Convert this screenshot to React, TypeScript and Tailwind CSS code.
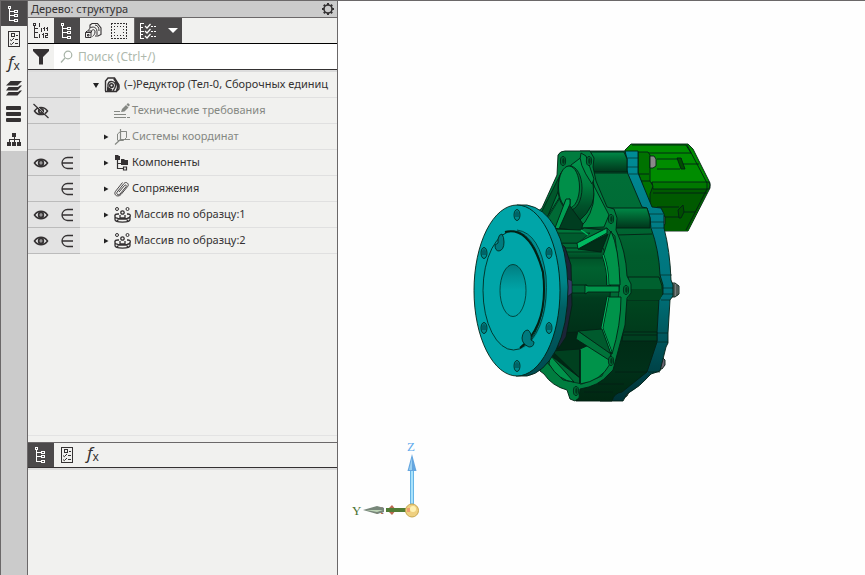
import React from "react";

type IconProps = { className?: string };

const stroke = { fill: "none", stroke: "currentColor" } as const;

function TreeIcon({ className = "" }: IconProps) {
  return (
    <svg className={className} width="16" height="18" viewBox="0 0 16 18" {...stroke} shapeRendering="crispEdges">
      <path d="M3.500 3v12.500H8M3.500 6.500H8M3.500 10.500H8" />
      <path d="M2.500 1.500h2v2h-2zM8.500 5.500h3v2h-3zM8.500 9.500h3v2h-3zM8.500 14.500h3v2h-3z" />
    </svg>
  );
}

function ChecklistIcon() {
  return (
    <svg width="16" height="18" viewBox="0 0 16 18" {...stroke}>
      <path d="M2.500 1.500h11v15h-11z" shapeRendering="crispEdges" />
      <path d="M5.500 3.500h3v3h-3zM10 5.500h2M9 9.500h3M9 13.500h3" shapeRendering="crispEdges" />
      <path d="m4 9.500 1.300 1.200L8 8M4 13.500l1.300 1.200L8 12" />
    </svg>
  );
}

function FxIcon() {
  return (
    <span className="flex items-end pb-1 leading-none">
      <i className="text-[17px] leading-4">f</i>
      <span className="text-[12px] leading-[8px]">x</span>
    </span>
  );
}

function LayersIcon() {
  return (
    <svg width="18" height="16" viewBox="0 0 18 16" fill="currentColor">
      <path d="M5.500 0H17l-4.500 4.500H1zM3.500 6H13l2-1.500h2L12.500 9.500H1zM3.500 11H13l2-1.500h2L12.500 14.500H1z" />
    </svg>
  );
}

function BarsIcon() {
  return (
    <svg width="18" height="18" viewBox="0 0 18 18" fill="currentColor">
      <rect x="1" y="1" width="15" height="4" rx="1" />
      <rect x="1" y="7" width="15" height="4" rx="1" />
      <rect x="1" y="13" width="15" height="4" rx="1" />
    </svg>
  );
}

function OrgIcon() {
  return (
    <svg width="16" height="16" viewBox="0 0 16 16" shapeRendering="crispEdges">
      <path d="M6 2h4v4H6zM1 11h4v4H1zM6 11h4v4H6zM11 11h4v4h-4z" fill="currentColor" />
      <path d="M8 6v5M3 11V8.500h10V11" {...stroke} />
    </svg>
  );
}

function NumberedTreeIcon() {
  return (
    <svg width="18" height="18" viewBox="0 0 18 18" shapeRendering="crispEdges">
      <path d="M2.500 3v12.500H6M2.500 6.500H6M2.500 10.500H6" {...stroke} />
      <path d="M1.500 1.500h2v2h-2z" {...stroke} />
      <path d="M7 1h1v4H7zM9 6h1v4H9zM12 5h1v4h-1zM11 6h1v1h-1zM15 5h1v4h-1zM14 6h1v1h-1zM11 11h1v5h-1zM10 12h1v1h-1zM13 11h3v3h-2v1h2v1h-3v-3h2v-1h-2zM7 12h1v4H7z" fill="currentColor" />
    </svg>
  );
}

function PartsIcon() {
  return (
    <svg width="18" height="18" viewBox="0 0 18 18" {...stroke}>
      <path d="M6 6V3l2-1.500h5.500L17 6v6.500L14 14h-3" strokeWidth="1.100" />
      <path d="M4.500 8.500C6 3.500 13 4 13 9.500v3.500M7.500 9.500c.5-3 4-2 3.500.5 0 2-1 3-2.500 4.500M11 3c3 .5 4 2.500 4 6" />
      <path d="M1.500 10.500H7v5H1.500zM3.500 12.500h1.500v1.500H3.500zM1.500 10.500 3 9h4.500v1.500" />
    </svg>
  );
}

function MarqueeIcon() {
  return (
    <svg width="18" height="18" viewBox="0 0 18 18" {...stroke} shapeRendering="crispEdges">
      <path d="M1.500 1v16M1 1.500h16M16.500 1v16M1 16.500h16" strokeDasharray="2 1" />
      <path d="M4.500 4v10M4 4.500h10M13.500 4v10M4 13.500h10" strokeDasharray="1 2" />
    </svg>
  );
}

function TickListIcon() {
  return (
    <svg width="20" height="18" viewBox="0 0 20 18" {...stroke}>
      <path d="M5 1.500H1.500v15H5M1.500 9.500H5M1.500 5.500H4M1.500 12.500H4M12 4.500h2M15 4.500h2M12 9.500h2M15 9.500h2M12 14.500h2M15 14.500h2" shapeRendering="crispEdges" />
      <path d="m6 4 2 2 3.500-4M6 9l2 2 3.500-4M6 14l2 2 3.500-4" strokeWidth="1.200" />
    </svg>
  );
}

function FilterIcon() {
  return (
    <svg width="18" height="18" viewBox="0 0 18 18" fill="currentColor">
      <path d="M1 1h16v2l-6 6v7.500H7V9L1 3z" />
    </svg>
  );
}

function SearchIcon() {
  return (
    <svg width="14" height="14" viewBox="0 0 14 14" {...stroke} className="shrink-0 text-[#a7b3a7]">
      <circle cx="8" cy="5" r="3.800" strokeWidth="1.200" />
      <path d="m5 8-4 4.500" strokeWidth="1.300" />
    </svg>
  );
}

function GearIcon() {
  return (
    <svg width="14" height="14" viewBox="0 0 14 14" {...stroke}>
      <path d="M7 1V3M7 11v2M1 7H3M11 7h2M2.800 2.800l1.300 1.300M9.900 9.900l1.300 1.300M11.200 2.800 9.900 4.100M4.100 9.900l-1.300 1.300" strokeWidth="2" />
      <circle cx="7" cy="7" r="4" strokeWidth="1.600" />
    </svg>
  );
}

function EyeIcon() {
  return (
    <svg width="16" height="14" viewBox="0 0 16 14">
      <path d="M1.500 7c3.200-4.800 9.800-4.800 13 0-3.200 4.800-9.800 4.800-13 0z" {...stroke} strokeWidth="1.600" />
      <circle cx="8" cy="7" r="2.300" {...stroke} strokeWidth="1.800" />
      <circle cx="8" cy="7" r=".8" fill="currentColor" />
    </svg>
  );
}

function EyeOffIcon() {
  return (
    <svg width="16" height="16" viewBox="0 0 16 16" {...stroke}>
      <path d="M1.500 8c3.200-4.800 9.800-4.800 13 0-3.200 4.800-9.800 4.800-13 0z" strokeWidth="1.500" />
      <circle cx="8" cy="8" r="2.200" strokeWidth="1.800" />
      <path d="m1.500 .500 14 14" stroke="#e3e3e3" />
      <path d="m.5 1 15 14" strokeWidth="1.200" />
    </svg>
  );
}

function MemberIcon() {
  return (
    <svg width="14" height="14" viewBox="0 0 14 14" {...stroke}>
      <path d="M13 1.500H7.500a5.500 5.500 0 0 0 0 11H13M2 7h11" strokeWidth="1.300" />
    </svg>
  );
}

function AssemblyIcon() {
  return (
    <svg width="16" height="16" viewBox="0 0 16 16" {...stroke}>
      <path d="M1.500 14V4L4 1h6.500l4.500 7v4l-2 2" strokeWidth="1.400" />
      <path d="M11 5c3 2 3.500 5 1.500 9M10 1.500c1 3 4 3.500 4.500 9" strokeWidth="1.800" />
      <path d="M4 12.500V7.500C5 3 11.500 4 11.500 8.500c0 2-1 3.500-2.500 5.500M1 14.500h12" strokeWidth="1.400" />
      <circle cx="7.500" cy="8.500" r="1.800" strokeWidth="1.500" />
      <path d="M4 14v-2.500l4 1.500" strokeWidth="2" />
    </svg>
  );
}

function NotesIcon() {
  return (
    <svg width="16" height="16" viewBox="0 0 16 16">
      <path d="M0 8.500h6M0 11.500h13M0 14.500h16" {...stroke} strokeDasharray="12 1" shapeRendering="crispEdges" />
      <path d="m7 9 1-3 4-4 2.500 2.500-4 4zM12.500 1.500 14 0l2 2-1.500 1.500z" fill="currentColor" />
    </svg>
  );
}

function AxesIcon() {
  return (
    <svg width="16" height="16" viewBox="0 0 16 16" {...stroke}>
      <path d="M6.500 0v10.500H16M6.500 10.500 1 15.500" strokeWidth="1.200" />
      <path d="M3.500 11V5L6.500 2.500h6v6L9.500 11.500M3.500 11.500h6M12.500 8.500V2.500" />
    </svg>
  );
}

function ComponentsIcon() {
  return (
    <svg width="16" height="16" viewBox="0 0 16 16">
      <path d="M1 0h3l1 1h1v4H1zM7 4h3l1 1h3v5H7z" fill="currentColor" />
      <path d="M3.500 5v8.500H9M3.500 8.500H8M9.500 12h3v3h-3z" {...stroke} strokeWidth="1.200" />
    </svg>
  );
}

function ClipIcon() {
  return (
    <svg width="16" height="16" viewBox="0 0 16 16" {...stroke}>
      <path d="M5 11 10.500 4.500c1-1.200 2.500 0 1.500 1.300L6 13c-1.700 1.800-4.300 0-2.800-2L10 2.500c2-2.500 5.500.3 3.800 2.800L7 13.500c-2.800 3.200-8 .8-5.500-3.200L8.500 1.500" strokeWidth=".9" />
    </svg>
  );
}

function PatternIcon() {
  return (
    <svg width="18" height="16" viewBox="0 0 18 16" {...stroke}>
      <circle cx="3" cy="2" r="1.500" />
      <circle cx="13.500" cy="2" r="1.500" />
      <circle cx="8.500" cy="5.500" r="1.700" strokeWidth="1.300" />
      <path d="M5 7H4C0 7-.5 10.500 4 11.500M13 7h1c3 0 3.500 3.500-1 4.500M1 10v2.500c0 3.500 15 3.500 15 0V10M6 8v3h5V8" strokeWidth="1.300" />
      <path d="M4 11.800h9M3 14l1-1M13 13l1 1" strokeWidth="1.800" />
    </svg>
  );
}

const railItems = [
  { label: "Дерево", icon: <TreeIcon />, active: true },
  { label: "Параметры", icon: <ChecklistIcon /> },
  { label: "Переменные", icon: <FxIcon /> },
  { label: "Слои", icon: <LayersIcon /> },
  { label: "Список", icon: <BarsIcon /> },
  { label: "Иерархия", icon: <OrgIcon /> },
];

type Row = {
  text: string;
  icon: React.ReactNode;
  arrow?: "open" | "closed";
  eye?: "on" | "off";
  member?: boolean;
  muted?: boolean;
  root?: boolean;
};

const rows: Row[] = [
  { text: "(–)Редуктор (Тел-0, Сборочных единиц", icon: <AssemblyIcon />, arrow: "open", root: true },
  { text: "Технические требования", icon: <NotesIcon />, eye: "off", muted: true },
  { text: "Системы координат", icon: <AxesIcon />, arrow: "closed", muted: true },
  { text: "Компоненты", icon: <ComponentsIcon />, arrow: "closed", eye: "on", member: true },
  { text: "Сопряжения", icon: <ClipIcon />, arrow: "closed", member: true },
  { text: "Массив по образцу:1", icon: <PatternIcon />, arrow: "closed", eye: "on", member: true },
  { text: "Массив по образцу:2", icon: <PatternIcon />, arrow: "closed", eye: "on", member: true },
];

function TreeRow({ row }: { row: Row }) {
  return (
    <li className="flex h-[26px]">
      <div className="flex w-[52px] shrink-0 border-b border-[#bbbbbb] bg-[#e3e3e3]">
        <span className="flex w-[26px] items-center justify-center">
          {row.eye && (
            <button aria-label="Видимость">{row.eye === "on" ? <EyeIcon /> : <EyeOffIcon />}</button>
          )}
        </span>
        <span className="flex w-[26px] items-center justify-center">
          {row.member && <button aria-label="Включение"><MemberIcon /></button>}
        </span>
      </div>
      <div
        className={`flex min-w-0 flex-1 items-center border-b border-[#e0e0e0] text-[11px] ${
          row.root ? "pl-3" : "pl-[22px]"
        } ${row.muted ? "text-[#858883]" : "text-[#343132]"}`}
      >
        <span className="flex w-3 shrink-0">
          {row.arrow && (
            <button aria-label="Развернуть" className="text-[#222]">
              <svg width="8" height="8" viewBox="0 0 8 8" fill="currentColor">
                <path d={row.arrow === "open" ? "M1 2h6L4 7z" : "M2 1.500v5L6.500 4z"} />
              </svg>
            </button>
          )}
        </span>
        <span className={row.root ? "mr-1 shrink-0" : "mr-0.5 shrink-0"}>{row.icon}</span>
        <span className="whitespace-nowrap">{row.text}</span>
      </div>
    </li>
  );
}

function Hole({ x, y }: { x: number; y: number }) {
  return (
    <g strokeWidth=".8">
      <ellipse cx={x} cy={y} rx="3" ry="5.500" fill="#008a8c" />
      <path d={`M${x - 2} ${y - 2}q2-4 4 0v4h-4z`} fill="#006468" stroke="none" />
    </g>
  );
}

function Lug({ x, y }: { x: number; y: number }) {
  return (
    <g>
      <ellipse cx={x} cy={y} rx="2.600" ry="4.500" fill="#006a35" strokeWidth=".8" />
      <ellipse cx={x + 0.4} cy={y} rx="1.200" ry="3" fill="#00381c" stroke="none" />
    </g>
  );
}

function Gearbox() {
  return (
    <svg
      role="img"
      aria-label="Редуктор"
      className="absolute left-[127px] top-[139px]"
      width="255"
      height="270"
      viewBox="465 140 255 270"
      stroke="#032014"
      strokeWidth=".9"
      strokeLinejoin="round"
    >
      <defs>
        <linearGradient id="side" x1="0" y1="151" x2="0" y2="402" gradientUnits="userSpaceOnUse">
          <stop offset="0" stopColor="#007038" />
          <stop offset=".22" stopColor="#006c36" />
          <stop offset=".42" stopColor="#005c2c" />
          <stop offset=".56" stopColor="#005a2b" />
          <stop offset=".6" stopColor="#00451f" />
          <stop offset=".73" stopColor="#003a1b" />
          <stop offset=".76" stopColor="#002c16" />
          <stop offset=".87" stopColor="#003019" />
          <stop offset="1" stopColor="#002711" />
        </linearGradient>
        <linearGradient id="rim" x1="0" y1="151" x2="0" y2="402" gradientUnits="userSpaceOnUse">
          <stop offset="0" stopColor="#008c96" />
          <stop offset=".22" stopColor="#007f89" />
          <stop offset=".55" stopColor="#00737b" />
          <stop offset=".7" stopColor="#005c62" />
          <stop offset=".85" stopColor="#00474c" />
          <stop offset="1" stopColor="#003034" />
        </linearGradient>
        <linearGradient id="tab" x1="0" y1="0" x2="0" y2="1">
          <stop offset="0" stopColor="#008a48" />
          <stop offset=".35" stopColor="#006b36" />
          <stop offset="1" stopColor="#00351b" />
        </linearGradient>
        <linearGradient id="drum" x1="0" y1="248" x2="0" y2="348" gradientUnits="userSpaceOnUse">
          <stop offset="0" stopColor="#007239" />
          <stop offset=".08" stopColor="#005027" />
          <stop offset=".2" stopColor="#00612f" />
          <stop offset=".4" stopColor="#00562a" />
          <stop offset=".5" stopColor="#003c1e" />
          <stop offset="1" stopColor="#002a15" />
        </linearGradient>
        <linearGradient id="flangeSide" x1="0" y1="205" x2="0" y2="376" gradientUnits="userSpaceOnUse">
          <stop offset="0" stopColor="#009ca0" />
          <stop offset=".45" stopColor="#008488" />
          <stop offset=".6" stopColor="#006064" />
          <stop offset="1" stopColor="#004a50" />
        </linearGradient>
        <linearGradient id="bore" x1="0" y1="0" x2="0" y2="1">
          <stop offset="0" stopColor="#007d80" />
          <stop offset=".25" stopColor="#009396" />
          <stop offset=".5" stopColor="#00a4a7" />
        </linearGradient>
        <linearGradient id="cone" x1="0" y1="0" x2="0" y2="1">
          <stop offset="0" stopColor="#009a50" />
          <stop offset=".45" stopColor="#007a3c" />
          <stop offset=".75" stopColor="#00522a" />
          <stop offset="1" stopColor="#003d20" />
        </linearGradient>
      </defs>

      {/* motor housing */}
      <path d="M625 150l6-6h57l5 5 17 34v5l-22 43h-26l-37-59z" fill="#008c00" />
      <path d="M650 182h59v6l-21 43h-26l-12-23z" fill="#005a00" stroke="none" />
      <path d="M652 182h57l1 3-1 4h-56z" fill="#007800" />
      <path d="M632 145h54l5 8-53 0M687 145l20 38v6l-21 41M653 193h54" fill="none" />
      <path d="M657 159h25M657 169h23M657 207h22M662 217h18M680 164h19M684 212h11" fill="none" />
      <path d="M677 158l4 0 4 11h-4zM678 210l5-5 1 7-3 6h-2z" fill="#004d00" />
      <path d="M638 152h10l2 3v26l3 5-3 8v12l-12-34z" fill="#007200" />
      <path d="M639 174h10M641 181h9" fill="none" />
      <path d="M650 156h4l2 3v7l-3 2h-3z" fill="#898989" />
      <path d="M660 214h3l2 3v7l-3 4h-3z" fill="#777" />

      {/* bolt heads at the rear rim */}
      <path d="M668 283h7l4 3v8l-4 3h-7z" fill="#777d7c" />
      <path d="M674 284v13M677 285v11" strokeWidth=".7" />
      <path d="M658 357h4l3 3v5l-3 4h-7zM622 392h7l-2 4-5 3z" fill="#6a6270" />

      {/* rear rim */}
      <path d="M625 151h13v22l14 34 9 1 3 6v14q6 23 7 52l2 5v11l-3 4-2 33v10l-2 4-6 24-9 3q-11 13-24 20l-4 7h-23l-6-50z" fill="url(#rim)" />
      <path d="M625 158h13M626 167h12M629 174h9M649 214h14M650 222h14M652 228h12M660 275h12M663 288h10M663 294h10M661 300h9M657 333h11M657 342h11M648 372h12" fill="none" strokeWidth=".6" />

      {/* casing side */}
      <path d="M580 151h45l2 8v11l1 4 14 33 5 1q4 9 4 20 8 22 9 47l3 10v9l-4 5-2 34v9l-10 30-25 20q-8 1-10 9h-36z" fill="url(#side)" />
      <path d="M588 152h36l3 7v13h-35z" fill="url(#tab)" />
      <path d="M607 208h40l3 10v10h-34z" fill="url(#tab)" />
      <path d="M628 277h31l3 9v8l-3 6h-33z" fill="#00612f" />
      <path d="M630 289h32v6l-2 5h-32z" fill="#00471f" stroke="none" />
      <path d="M623 332h34v9h-35z" fill="#003f20" />
      <path d="M622 335h35M615 372h32M598 384h26M584 392h29M617 235l35-1M594 173h34" fill="none" />

      {/* front face of the casing */}
      <path d="M558 155q2-4 7-4h25l4 7-1 9 3 14 11 26 7 2 3 9-1 12q10 21 11 46l4 8v9l-4 5-2 27-8 30-4 15-4 4q-10 12-29 15l-1 9-4 3-5-2-3-9q-15-4-23-16l-4-3-18-70 14-88 6-5 15-33z" fill="#007d3f" />
      <path d="M561 173l-20 40 6 5 16-38z" fill="#00572b" />
      <path d="M564 190l-11 34-7-5z" fill="#008c48" />
      <path d="M546 221l17-28 10 36 34-1 8 8 5 45-4 38-5 37-9 20-20 8-19-4-20-22z" fill="#006a35" strokeWidth=".7" />

      {/* bearing cover */}
      <path d="M571 165l12-9 10 24q3 13-1 24-4 10-14 18l-13-12z" fill="url(#cone)" />
      <path d="M581 153q-4 9 11 31l2-5-8-23z" fill="#008a45" />
      <path d="M593 184q4 21-8 38l-6 6 25-1 5-12z" fill="#008c46" />
      <ellipse cx="570" cy="188" rx="12" ry="22" fill="#007138" />
      <ellipse cx="569" cy="187" rx="10.500" ry="21" fill="#008f49" />
      <path d="M566 200l4-1v7l13 18-2 7-25-3z" fill="#003d20" />
      <path d="M566 199h4v5l-11 25-4-1z" fill="#009d52" />

      {/* upper ledge */}
      <path d="M554 229l27 1 3-2 19 2-25 13h-19z" fill="#00753a" />
      <path d="M556 233h34l-12 10h-19z" fill="#005c2e" strokeWidth=".6" />
      <path d="M581 230l7 5" stroke="#00b860" strokeWidth="1.500" />

      {/* central drum and ring pockets */}
      <path d="M560 248h43l3 7q6 20 4 42l-3 17-5 19-42 14z" fill="url(#drum)" />
      <path d="M564 252h38M566 258h36" fill="none" strokeWidth=".7" />
      <path d="M603 256l8-25q8 17 9 54h-13q1-15-4-29z" fill="#00934a" />
      <path d="M608 297h13q0 28-9 57l-10-26z" fill="#00934a" />
      <path d="M603 255q5 14 5 30M608 297l-6 31 9 24" fill="none" strokeWidth="2.600" />
      <path d="M603 255q5 14 5 30M608 297l-6 31 9 24" fill="none" stroke="#00b45c" strokeWidth="1.200" />
      <path d="M578 249l30-15-7 18z" fill="#002f18" />
      <path d="M577 243l30-15v5l-29 16z" fill="#00b960" />
      <path d="M570 285h17v8h-17z" fill="#006030" />
      <path d="M585 285l3 1h31v6h-31l-3 2z" fill="#00944a" />

      {/* lower ribs and pockets */}
      <path d="M560 333l18-1 10 13-8 33-30-23z" fill="#002714" />
      <path d="M552 351l28-2v29z" fill="#00401f" />
      <path d="M550 355l24 27q-15-1-25-18z" fill="#00934a" />
      <path d="M580 349l9-4 22 13-1 6q-9 17-30 20z" fill="#00934a" />
      <path d="M580 350v33" fill="none" strokeWidth="1.600" />
      <path d="M578 331l24-2 9 25-7-4z" fill="#005a2d" />
      <path d="M578 331l33 23-2 6-33-21z" fill="#00733a" />

      <Lug x={563} y={161} />
      <Lug x={589} y={161} />
      <Lug x={611} y={219} />
      <Lug x={626} y={290} />
      <Lug x={611} y={361} />
      <Lug x={576} y={391} />

      {/* mounting flange */}
      <path d="M560 243l5 4 6 18 1 40-6 32-8 12z" fill="#1c2438" />
      <path d="M566 278l6 3v12l-5 4z" fill="#383a68" strokeWidth=".6" />
      <path d="M517 205h10q17 3 28 22 12 22 13 60 0 39-12 63-12 23-29 26h-11z" fill="url(#flangeSide)" />
      <ellipse cx="517" cy="290.500" rx="43" ry="85.500" fill="#00a5a8" />
      <ellipse cx="515" cy="290" rx="32" ry="60" fill="#008c90" stroke="none" />
      <ellipse cx="513.500" cy="290.500" rx="30.500" ry="59.500" fill="#00a5a8" strokeWidth=".8" />
      <path d="M505 232q25-6 38 40 6 53-23 76" fill="none" strokeWidth="2" />
      <path d="M517 230q23 3 29 46 3 48-20 70" fill="none" strokeWidth=".7" />
      <ellipse cx="513" cy="290.500" rx="13" ry="26" fill="url(#bore)" strokeWidth=".7" />
      <Hole x={517} y={215} />
      <Hole x={484} y={253} />
      <Hole x={549} y={253} />
      <Hole x={484} y={328} />
      <Hole x={549} y={328} />
      <Hole x={517} y={366} />
      <path d="M498 243v-4q1-5 4-5 2 3 2 8 0 8-5 9-4 0-4-6z" fill="#007b7f" strokeWidth=".8" />
      <path d="M522 338q1-8 6-8 4 3 3 10l3 2q0 5-5 5-7-3-7-9z" fill="#007b7f" strokeWidth=".8" />
    </svg>
  );
}

function AxisTriad() {
  return (
    <svg
      role="img"
      aria-label="Оси координат"
      className="absolute bottom-[51px] left-3"
      width="76"
      height="88"
      viewBox="350 436 76 88"
    >
      <text x="407" y="451" fontSize="13" fontFamily="Liberation Serif, serif" fill="#62abed">Z</text>
      <text x="352" y="515" fontSize="13" fontFamily="Liberation Serif, serif" fill="#4b7333">Y</text>
      <text x="376" y="514" fontSize="11" fontFamily="Liberation Serif, serif" fill="#9b5039">X</text>
      <path d="M410.500 469h3v35h-3z" fill="#a9e2fb" stroke="#65b4e6" />
      <path d="M412 454l4.500 17h-9z" fill="#65a6df" />
      <path d="M412 458v12h-3z" fill="#9bd1f2" />
      <path d="M387 510l5-5 4 5-4 5z" fill="#bb6951" />
      <path d="M386 508h22v4h-22z" fill="#507c35" />
      <path d="M363 510l14-4 7 2v4l-7 2z" fill="#78877a" />
      <path d="M366 510h17l-6 2z" fill="#bdd5b7" />
      <circle cx="412" cy="510.500" r="6.500" fill="#efd080" stroke="#c8a84f" />
      <circle cx="413" cy="509" r="3" fill="#fff2b4" />
      <path d="M407 508h3v4h-3z" fill="#ef9f70" />
    </svg>
  );
}

export default function App() {
  const toolButton = "flex h-[25px] w-[26px] items-center justify-center";
  return (
    <div className="flex h-screen overflow-hidden border-l border-t border-[#6b6869] bg-[#fefefe] font-['Noto_Sans',sans-serif] text-[12px] text-[#343132]">
      <nav className="w-[27px] shrink-0 border-r border-[#6b6869] bg-[#cbcbcb]" aria-label="Панели">
        {railItems.map((item) => (
          <button
            key={item.label}
            aria-label={item.label}
            className={`flex h-[25px] w-full items-center justify-center ${
              item.active ? "bg-[#4b494a] text-white" : "bg-[#f1f1ef]"
            }`}
          >
            {item.icon}
          </button>
        ))}
      </nav>

      <aside className="flex w-[310px] shrink-0 flex-col border-r border-[#6b6869] bg-[#f1f1ef]">
        <header className="flex h-[17px] shrink-0 items-center justify-between border-b border-[#6b6869] bg-[#cbcbcb] pl-[3px] pr-0.5">
          <h1 className="text-[11px]">Дерево: структура</h1>
          <button aria-label="Настройка"><GearIcon /></button>
        </header>

        <div className="flex h-[26px] shrink-0 border-b border-black" role="toolbar">
          <button aria-label="Нумерация" className={toolButton}><NumberedTreeIcon /></button>
          <button aria-label="Структура" className={`${toolButton} bg-[#4b494a] text-white`}><TreeIcon /></button>
          <button aria-label="Детали" className={toolButton}><PartsIcon /></button>
          <button aria-label="Область" className={toolButton}><MarqueeIcon /></button>
          <button
            aria-label="Состав дерева"
            className="ml-0.5 flex h-[25px] w-12 items-center justify-between border-l border-[#6b6869] bg-[#4b494a] px-1 text-white"
          >
            <TickListIcon />
            <svg width="10" height="6" viewBox="0 0 10 6" fill="currentColor"><path d="M0 0h10L5 5z" /></svg>
          </button>
        </div>

        <div className="flex h-[26px] shrink-0 border-b border-[#343132]">
          <button aria-label="Фильтр" className="flex w-[26px] items-center justify-center"><FilterIcon /></button>
          <label className="flex flex-1 items-center gap-1 bg-white pl-[6px]">
            <SearchIcon />
            <input
              type="search"
              aria-label="Поиск"
              placeholder="Поиск (Ctrl+/)"
              className="w-full bg-transparent outline-none placeholder:text-[#aeb9ad]"
            />
          </label>
        </div>

        <ul className="min-h-0 flex-1 overflow-hidden border-t-2 border-[#dcdcdc]">
          {rows.map((row) => (
            <TreeRow key={row.text} row={row} />
          ))}
        </ul>

        <section className="h-[140px] shrink-0 border-t border-[#e3e3e3] pt-[6px]">
          <div className="flex h-[26px] border-b border-t border-b-[#343132] border-t-[#6b6869]">
            <button aria-label="Структура" className="flex w-[26px] items-center justify-center bg-[#4b494a] text-white"><TreeIcon /></button>
            <button aria-label="Параметры" className="flex w-[26px] items-center justify-center"><ChecklistIcon /></button>
            <button aria-label="Переменные" className="flex w-[26px] items-center justify-center"><FxIcon /></button>
          </div>
          <div className="h-0.5 bg-[#dcdcdc]" />
        </section>
      </aside>

      <main className="relative min-w-0 flex-1 overflow-hidden">
        <Gearbox />
        <AxisTriad />
      </main>
    </div>
  );
}
